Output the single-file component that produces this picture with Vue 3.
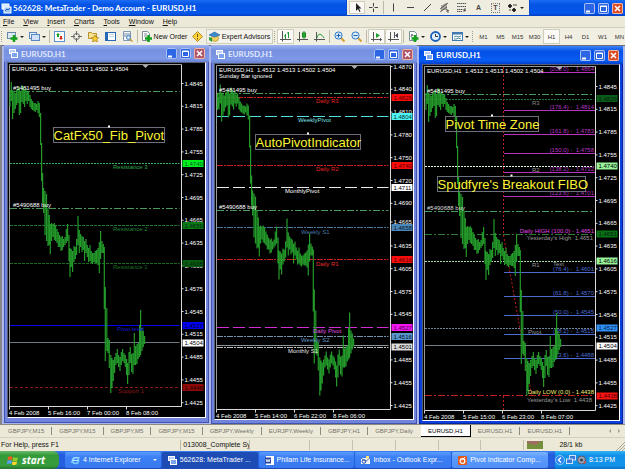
<script setup>
const menus = ['File', 'View', 'Insert', 'Charts', 'Tools', 'Window', 'Help']
const frames = ['M1', 'M5', 'M15', 'M30', 'H1', 'H4', 'D1', 'W1', 'MN']
const tabs = [
  'GBPJPY,M15', 'GBPJPY,M15', 'GBPJPY,M5', 'GBPJPY,M15', 'GBPJPY,Weekly', 'EURJPY,Weekly',
  'GBPJPY,H1', 'GBPJPY,Daily', 'EURUSD,H1', 'EURUSD,H1', 'EURUSD,H1',
]
const activeTab = 8
const quote = 'EURUSD,H1\u00a0 1.4512 1.4513 1.4502 1.4504'

/* x, high, low of every bar */
const bars = [
  [2, 27, 44], [3.3, 19, 38], [4.6, 27, 56], [6, 28, 50], [7.3, 30, 46], [8.6, 27, 42], [10, 25, 40], [11.3, 24, 52],
  [12.6, 28, 50], [14, 22, 39], [15.3, 24, 41], [16.6, 27, 44], [18, 25, 38], [19.3, 29, 41], [20.6, 28, 38], [22, 32, 44],
  [23.3, 36, 46], [24.6, 38, 47], [26, 40, 48], [27.3, 40, 49], [28.6, 41, 47], [30, 38, 50], [31.3, 40, 54], [32.6, 50, 82],
  [33.6, 80, 118], [34.6, 110, 140], [35.6, 125, 150], [37, 128, 172], [38.5, 131, 178], [40, 145, 183], [41.3, 152, 182],
  [42.3, 161, 191], [43.6, 160, 178], [45, 161, 174], [46.3, 160, 177], [47.6, 162, 178], [49, 166, 180], [50.3, 169, 184],
  [51.6, 172, 184], [53, 174, 188], [54.3, 173, 187], [55.6, 176, 184], [57, 174, 182], [58.3, 166, 180], [59.6, 161, 178],
  [61, 172, 198], [62, 185, 214], [63.3, 186, 204], [64.6, 188, 209], [66, 183, 199], [67.3, 184, 196], [68.6, 176, 192],
  [70, 153, 182], [71.3, 167, 190], [72.6, 171, 184], [74, 173, 189], [75.3, 174, 187], [76.6, 178, 198], [78, 176, 190],
  [79.3, 182, 194], [80.6, 185, 199], [82, 182, 198], [83.3, 188, 200], [84.6, 190, 201], [86, 190, 199], [87.3, 188, 200],
  [88.6, 187, 200], [90, 185, 202], [91.3, 179, 210], [92.6, 168, 196], [94, 178, 190], [95.3, 181, 190], [96.3, 184, 246],
  [97.3, 224, 298], [98.8, 245, 288], [100, 275, 290], [101.3, 277, 305], [102.8, 292, 330], [104, 295, 325], [105.3, 297, 318],
  [106.6, 294, 310], [108, 290, 302], [109.3, 286, 300], [110.6, 292, 304], [112, 294, 308], [113.3, 289, 302], [114.6, 286, 298],
  [116, 290, 300], [117.3, 292, 304], [118.6, 296, 312], [119.6, 300, 321], [121, 289, 312], [122.3, 284, 300], [123.6, 291, 309],
  [125, 290, 311], [126.3, 270, 302], [127.6, 283, 302], [129, 281, 301], [130.3, 280, 296], [131.6, 262, 294], [132.6, 247, 292],
  [134, 265, 288], [135.3, 268, 284], [136.6, 273, 281],
]
const barPath = bars.map(([x, h, l]) => `M${x} ${h}V${l}`).join('')

function scale(first, count, y) {
  return Array.from({ length: count }, (_, i) => ({ v: (first - i * 0.003).toFixed(4), y: y + i * 22.8 }))
}
const DD = '7 2 2 2'
const charts = [
  {
    id: 'a', w: 197, h: 354, axis: 173.5, base: 343.5, dx: 0, dy: 0, head: 8, sub: '',
    scale: scale(1.4845, 15, 20.5),
    times: ['4 Feb 2008', '5 Feb 16:00', '7 Feb 00:00', '8 Feb 08:00'],
    lines: [
      { y: 28.5, c: '#4a9a5c', d: DD }, { y: 100.5, c: '#3cb062', d: '2 1' }, { y: 145.5, c: '#4a9a5c', d: DD },
      { y: 162.5, c: '#1f7a30', d: '3 1' }, { y: 200.5, c: '#196a22', d: '3 1' }, { y: 262.5, c: '#0404f0' },
      { y: 279.5, c: '#6c7884' }, { y: 324.5, c: '#8c1818', d: '3 2' },
    ],
    texts: [
      { x: 5, y: 27, t: '#5481495 buy', c: '#fff' }, { x: 5, y: 144, t: '#5490688 buy', c: '#fff' },
      { x: 105, y: 106, t: 'Resistance 3', c: '#30a850' }, { x: 105, y: 168, t: 'Resistance 2', c: '#208034' },
      { x: 105, y: 206, t: 'Resistance 1', c: '#1a6c22' }, { x: 109, y: 268, t: 'Pivot level', c: '#1818d8' },
      { x: 110, y: 330, t: 'Support 1', c: '#901818' },
    ],
    tags: [
      { y: 100, v: '1.4740', b: '#00f01c', c: '#053' }, { y: 162, v: '1.4659', b: '#0c7a14', c: '#021' },
      { y: 200, v: '1.4608', b: '#0a5c10', c: '#021' }, { y: 262, v: '1.4527', b: '#0000f0', c: '#003' },
      { y: 279.5, v: '1.4504', b: '#fff', c: '#000' }, { y: 324, v: '1.4446', b: '#8e0a0a', c: '#200' },
    ],
    notes: [{ x: 45.5, y: 64.5, w: 111, h: 15, t: 'CatFx50_Fib_Pivot' }],
    fibs: [],
  },
  {
    id: 'b', w: 198, h: 355, axis: 175.5, base: 345.5, dx: 2, dy: 1.5, head: 8, sub: 'Sunday Bar ignored',
    scale: scale(1.487, 16, 3.5).filter((s) => s.v !== '1.4510' && s.v !== '1.4660')
      .map((s) => (Number(s.v) < 1.466 ? { v: (Number(s.v) + 0.0005).toFixed(4), y: s.y - 4 } : { ...s, y: s.y - 1 }))
      .concat([{ v: '1.4665', y: 158 }]),
    times: ['4 Feb 2008', '5 Feb 14:00', '6 Feb 22:00', '8 Feb 06:00'],
    lines: [
      { y: 29.5, c: '#4a9a5c', d: DD }, { y: 33.5, c: '#c82020', d: '6 1 2 1' }, { y: 52.5, c: '#4fe0e0', d: '12 4' },
      { y: 101.5, c: '#c82020', d: '6 1 2 1' }, { y: 123.5, c: '#e8e8e8', d: '12 4' }, { y: 146.5, c: '#4a9a5c', d: DD },
      { y: 163.5, c: '#4a7698', d: '6 1 2 1' }, { y: 195.5, c: '#c82020', d: '6 1 2 1' }, { y: 263.5, c: '#d42cd4', d: '12 4' },
      { y: 272.5, c: '#7593ac', d: '6 1 2 1' }, { y: 281.5, c: '#8d959c' }, { y: 283.5, c: '#b8b8b8', d: '6 1 2 1' },
    ],
    texts: [
      { x: 4, y: 28, t: '#5481495 buy', c: '#fff' }, { x: 4, y: 145, t: '#5490688 buy', c: '#fff' },
      { x: 101, y: 39, t: 'Daily R3', c: '#e42424' }, { x: 83, y: 58, t: 'WeeklyPivot', c: '#7fe4e4' },
      { x: 101, y: 107, t: 'Daily R2', c: '#e42424' }, { x: 70, y: 129, t: 'MonthlyPivot', c: '#fff' },
      { x: 86, y: 170, t: 'Weekly S1', c: '#4c78a8' }, { x: 101, y: 202, t: 'Daily R1', c: '#e83030' },
      { x: 98, y: 269, t: 'Daily Pivot', c: '#e050e0' }, { x: 86, y: 278, t: 'Weekly S2', c: '#6694c4' },
      { x: 73, y: 289, t: 'Monthly S1', c: '#e8e8e8' },
    ],
    tags: [
      { y: 33, v: '1.4829', b: '#f80c0c', c: '#500' }, { y: 52, v: '1.4804', b: '#4ff4f4', c: '#033' },
      { y: 101, v: '1.4740', b: '#f80c0c', c: '#500' }, { y: 123, v: '1.4711', b: '#fff', c: '#000' },
      { y: 163, v: '1.4658', b: '#4a86b8', c: '#012' }, { y: 195, v: '1.4616', b: '#f80c0c', c: '#500' },
      { y: 263, v: '1.4527', b: '#f414f4', c: '#404' }, { y: 272, v: '1.4516', b: '#5a96cc', c: '#012' },
      { y: 282.5, v: '1.4501', b: '#dcdcdc', c: '#000' },
    ],
    notes: [{ x: 40.5, y: 70.5, w: 105, h: 15, t: 'AutoPivotIndicator' }],
    fibs: [],
  },
  {
    id: 'c', w: 196, h: 355, axis: 172.5, base: 345.5, dx: 1, dy: 1, head: 8, sub: '', active: true,
    scale: scale(1.4845, 15, 21.5),
    times: ['4 Feb 2008', '5 Feb 15:00', '6 Feb 23:00', '8 Feb 07:00'],
    lines: [
      { y: 29.5, c: '#4a9a5c', d: DD }, { y: 34.5, c: '#1f7a3c', d: '2 1' }, { y: 101.5, c: '#d8f0d8', d: '2 1' },
      { y: 146.5, c: '#4a9a5c', d: DD }, { y: 169.5, c: '#2c7a34', d: DD }, { y: 196.5, c: '#a8d8a8', d: '2 1' },
      { y: 263.5, c: '#6f8494', d: '2 1' }, { y: 280.5, c: '#747c84' }, { y: 330.5, c: '#c42020', d: DD },
    ],
    texts: [
      { x: 4, y: 28, t: '#5481495 buy', c: '#fff' }, { x: 4, y: 145, t: '#5490688 buy', c: '#ddd' },
      { x: 109, y: 40, t: 'R3', c: '#888' }, { x: 109, y: 107, t: 'R2', c: '#999' }, { x: 109, y: 202, t: 'R1', c: '#999' },
      { x: 130, y: 201, t: 'Text', c: '#999' }, { x: 105, y: 269, t: 'Pivot', c: '#999' },
      { x: 171, y: 168, t: 'Daily HIGH (100.0) - 1.4651', c: '#e044e4', e: true },
      { x: 170, y: 175, t: "Yesterday's High\u00a0 1.4651", c: '#999', e: true },
      { x: 171, y: 329, t: 'Daily LOW (0.0) - 1.4438', c: '#f0ec70', e: true },
      { x: 169, y: 337, t: "Yesterday's Low\u00a0 1.4438", c: '#999', e: true },
    ],
    tags: [
      { y: 33, v: '1.4829', b: '#0a5c18', c: '#021' }, { y: 100.5, v: '1.4740', b: '#98f498', c: '#000' },
      { y: 168.5, v: '1.4651', b: '#0a7014', c: '#021' }, { y: 195.5, v: '1.4616', b: '#98f498', c: '#000' },
      { y: 262.5, v: '1.4527', b: '#3090f8', c: '#024' }, { y: 280.5, v: '1.4504', b: '#fff', c: '#000' },
      { y: 330.5, v: '1.4438', b: '#f41414', c: '#500' },
    ],
    notes: [
      { x: 22.5, y: 51.5, w: 93, h: 15, t: 'Pivot Time Zone' },
      { x: 14.5, y: 111.5, w: 148, h: 15, t: "Spudfyre's Breakout FIBO" },
    ],
    fibs: [
      { y: 7.5, t: '(200.0) -\u00a0 1.4864', c: '#b834c0' }, { y: 45.5, t: '(176.4) -\u00a0 1.4814', c: '#b834c0' },
      { y: 69.5, t: '(161.8) -\u00a0 1.4783', c: '#b834c0' }, { y: 88.5, t: '(150.0) -\u00a0 1.4758', c: '#b834c0' },
      { y: 107.5, t: '(138.2) -\u00a0 1.4732', c: '#b834c0' }, { y: 131.5, t: '(123.6) -\u00a0 1.4701', c: '#b834c0' },
      { y: 207.5, t: '(76.4) -\u00a0 1.4601', c: '#4c6cd0' }, { y: 231.5, t: '(61.8) -\u00a0 1.4570', c: '#4c6cd0' },
      { y: 250.5, t: '(50.0) -\u00a0 1.4545', c: '#4c6cd0' }, { y: 269.5, t: '(38.2) -\u00a0 1.4515', c: '#4c6cd0' },
      { y: 293.5, t: '(23.6) -\u00a0 1.4488', c: '#4c6cd0' },
    ],
  },
]
</script>

<template>
  <div class="app">
    <header class="titlebar">
      <svg class="ic" viewBox="0 0 11 11"><rect x="1" y="1" width="7" height="5" fill="#cfe4ff" stroke="#fff" /><rect x="3" y="4" width="7" height="6" fill="#9cc4f4" stroke="#fff" /><path d="M4 8l2-2 1 1 2-2" stroke="#2560c0" fill="none" /></svg>
      <h1>562628: MetaTrader - Demo Account - EURUSD,H1</h1>
      <div class="drawbar">
        <button class="tb on" aria-label="Cursor"><svg class="ic" viewBox="0 0 11 11"><path d="M4 1v8l2-2 1.500 3 1-.5L7 6.500h2.500z" fill="#222" /></svg></button>
        <button class="tb" aria-label="Crosshair"><svg class="ic" viewBox="0 0 11 11"><path d="M5.500 1v3.500M5.500 6.500V10M1 5.500h3.500M6.500 5.500H10" stroke="#444" /></svg></button>
        <i class="sep"></i>
        <button class="tb" aria-label="Vertical line"><svg class="ic" viewBox="0 0 11 11"><path d="M5.500 1.500v8" stroke="#444" /></svg></button>
        <button class="tb" aria-label="Horizontal line"><svg class="ic" viewBox="0 0 11 11"><path d="M2 5.500h7" stroke="#444" /></svg></button>
        <button class="tb" aria-label="Trendline"><svg class="ic" viewBox="0 0 11 11"><path d="M2 9l7-7" stroke="#444" /></svg></button>
        <button class="tb" aria-label="Equidistant channel"><svg class="ic" viewBox="0 0 11 11"><path d="M1 7l8-6M1 10l7-5M3 3v6M5 2v6M7 1v7M8 7v3h2M8 8.500h2" stroke="#444" fill="none" stroke-width=".8" /></svg></button>
        <button class="tb" aria-label="Fibonacci retracement"><svg class="ic" viewBox="0 0 11 11"><path d="M1 1.500h9M1 4.500h9M1 7.500h6M1 9.500h5" stroke="#555" stroke-dasharray="1.500 .5" /><path d="M8 10V7h2M8 8.500h2" stroke="#333" fill="none" stroke-width=".8" /></svg></button>
        <button class="tb letter">A</button>
        <button class="tb letter"><span class="boxed">T</span></button>
        <button class="tb wide" aria-label="Arrows"><svg class="ic" viewBox="0 0 11 11"><path d="M1 4l2-2 2 2-2 2zM5 8l2-2 2 2-2 2zM6 3h4M2 8h2" fill="#222" stroke="#222" stroke-width=".8" /></svg><i class="dd"></i></button>
      </div>
      <div class="ctl">
        <button aria-label="Minimize"><svg viewBox="0 0 11 11"><path d="M2 8.500h4" stroke="#fff" stroke-width="2" /></svg></button>
        <button aria-label="Restore"><svg viewBox="0 0 11 11"><path d="M2.500 3h6v5.500h-6zM2.500 3.500h6" stroke="#fff" fill="none" /></svg></button>
        <button class="x" aria-label="Close"><svg viewBox="0 0 11 11"><path d="M3 3l5 5M8 3L3 8" stroke="#fff" stroke-width="1.500" /></svg></button>
      </div>
    </header>

    <nav class="menu">
      <button v-for="m in menus" :key="m"><u>{{ m[0] }}</u>{{ m.slice(1) }}</button>
    </nav>

    <div class="toolbar">
      <i class="grip"></i>
      <button class="tb wide" aria-label="New chart"><svg class="ic" viewBox="0 0 11 11"><rect x=".5" y="1.500" width="8" height="6" fill="#dcebf8" stroke="#6888a8" /><path d="M7 4v7M3.500 7.500h7" stroke="#14a01c" stroke-width="2.500" /></svg><i class="dd"></i></button>
      <button class="tb wide" aria-label="Profiles"><svg class="ic" viewBox="0 0 11 11"><rect x=".5" y="1.500" width="7" height="6" fill="#e4f0fc" stroke="#5c86bc" /><rect x="2.500" y="3.500" width="8" height="6" fill="#cfe2f8" stroke="#5c86bc" /></svg><i class="dd"></i></button>
      <i class="sep"></i>
      <button class="tb" aria-label="Market Watch"><svg class="ic" viewBox="0 0 11 11"><rect x=".5" y=".5" width="10" height="10" fill="#fff" stroke="#5c90cc" /><path d="M2 4l2-2 2 2H5v2H3V4z" fill="#18a028" /><path d="M5 7h1V5h2v2h1L7 9z" fill="#d83018" /></svg></button>
      <button class="tb" aria-label="Data Window"><svg class="ic" viewBox="0 0 11 11"><circle cx="5.500" cy="5.500" r="3" fill="none" stroke="#666" /><path d="M5.500 0v4M5.500 7v4M0 5.500h4M7 5.500h4" stroke="#666" /></svg></button>
      <button class="tb" aria-label="Navigator"><svg class="ic" viewBox="0 0 11 11"><path d="M.5 1.500h3l1 1h4v5h-8z" fill="#f8e490" stroke="#b89030" /><path d="M7 4l1.200 2.300 2.500.3L9 8.400l.4 2.500L7 9.700l-2.400 1.200L5 8.400 3.300 6.600l2.500-.3z" fill="#fcd030" stroke="#a87818" stroke-width=".7" /></svg></button>
      <button class="tb" aria-label="Terminal"><svg class="ic" viewBox="0 0 11 11"><rect x=".5" y="1.500" width="10" height="8" fill="#fff" stroke="#2868b8" /><path d="M1 2h2v7H1z" fill="#2868b8" /><path d="M4 3.500h5M4 5.500h5" stroke="#c4d8ec" /></svg></button>
      <button class="tb" aria-label="Strategy Tester"><svg class="ic" viewBox="0 0 11 11"><path d="M1.500.5h7v9h-7z" fill="#f4f8fc" stroke="#8098b0" /><path d="M3 2v4M5 2v5M7 2v3" stroke="#7890a8" /><circle cx="6.500" cy="6.500" r="2" fill="#cfe6fa" stroke="#4880c0" /><path d="M8 8l2.500 2.500" stroke="#c89830" stroke-width="1.500" /></svg></button>
      <i class="sep"></i>
      <button class="tb order"><svg class="ic" viewBox="0 0 11 11"><path d="M1.500.5h5l2 2v7h-7z" fill="#fff" stroke="#7c8c98" /><path d="M3 3h3M3 5h3" stroke="#889" /><path d="M7.500 4v7M4 7.500h7" stroke="#14a01c" stroke-width="2.500" /></svg>New Order</button>
      <button class="tb" aria-label="MetaEditor"><svg class="ic" viewBox="0 0 11 11"><path d="M5.500.5l5 5-5 5-5-5z" fill="#fcd440" stroke="#b88818" /><path d="M5.500 3v3M5.500 7v1.500" stroke="#7a5008" /></svg></button>
      <button class="tb ea on"><svg class="ic" viewBox="0 0 11 11"><circle cx="6" cy="7" r="3.500" fill="#f0d060" stroke="#a88420" stroke-width=".6" /><path d="M0 4l5.500-3L11 4 5.500 6z" fill="#3c8cd0" stroke="#205c98" stroke-width=".6" /><path d="M0 6v3l3 2V7z" fill="#28a038" /></svg>Expert Advisors</button>
      <i class="grip"></i>
      <button class="tb on" aria-label="Bar chart"><svg class="ic" viewBox="0 0 11 11"><path d="M2.500 0v10.500M0 8.500h11" stroke="#555" /><path d="M5.500 3v5M8.500 1v6M7 2h1.500M4 5h1.500" stroke="#1c9830" /></svg></button>
      <button class="tb" aria-label="Candlesticks"><svg class="ic" viewBox="0 0 11 11"><path d="M2.500 1v9.500M0 8.500h11" stroke="#555" /><path d="M7 0v8" stroke="#1c9830" /><rect x="5.500" y="2" width="3" height="4" fill="#28b03c" stroke="#14801c" /></svg></button>
      <button class="tb" aria-label="Line chart"><svg class="ic" viewBox="0 0 11 11"><path d="M2.500 1v9.500M0 8.500h11" stroke="#555" /><path d="M3 7c1-5 4-5 7 0" stroke="#1c9830" fill="none" /></svg></button>
      <i class="sep"></i>
      <button class="tb" aria-label="Zoom in"><svg class="ic" viewBox="0 0 11 11"><path d="M7 7l3.500 3.500" stroke="#d0a030" stroke-width="2" /><circle cx="4.500" cy="4.500" r="3.600" fill="#d8ecfc" stroke="#2c78c8" /><path d="M2.500 4.500h4M4.500 2.500v4" stroke="#2060b0" /></svg></button>
      <button class="tb" aria-label="Zoom out"><svg class="ic" viewBox="0 0 11 11"><path d="M7 7l3.500 3.500" stroke="#d0a030" stroke-width="2" /><circle cx="4.500" cy="4.500" r="3.600" fill="#d8ecfc" stroke="#2c78c8" /><path d="M2.500 4.500h4" stroke="#2060b0" /></svg></button>
      <i class="sep"></i>
      <button class="tb on" aria-label="Auto scroll"><svg class="ic" viewBox="0 0 11 11"><path d="M2.500 1v9.500M0 8.500h11M9.500 7v3" stroke="#555" /><path d="M5 2l4 2.500L5 7z" fill="#1ca030" /></svg></button>
      <button class="tb on" aria-label="Chart shift"><svg class="ic" viewBox="0 0 11 11"><path d="M2.500 1v9.500M0 8.500h11M6.500 1v6" stroke="#555" /><path d="M10 2L7 4.500 10 7z" fill="#445" /></svg></button>
      <i class="sep"></i>
      <button class="tb wide" aria-label="Indicators"><svg class="ic" viewBox="0 0 11 11"><path d="M1.500.5h5l2 2v7h-7z" fill="#fff" stroke="#7c8c98" /><path d="M3 6l1-3 1 2" stroke="#667" fill="none" /><path d="M7 4v7M3.500 7.500h7" stroke="#14a01c" stroke-width="2.500" /></svg><i class="dd"></i></button>
      <button class="tb wide" aria-label="Periods"><svg class="ic" viewBox="0 0 11 11"><circle cx="5.500" cy="5.500" r="4.500" fill="#e4f2fe" stroke="#1c62b8" stroke-width="1.800" /><path d="M5.500 3v2.500H8" stroke="#333" fill="none" /></svg><i class="dd"></i></button>
      <button class="tb wide" aria-label="Templates"><svg class="ic" viewBox="0 0 11 11"><rect x=".5" y="1.500" width="10" height="8" fill="#fff" stroke="#4078b0" /><path d="M1 2.500h9" stroke="#4078b0" stroke-width="2" /><path d="M2 6l2-1 2 1 3-1M2 8h3l1-1 3 1" stroke="#4a90a0" fill="none" /></svg><i class="dd"></i></button>
      <i class="grip"></i>
      <button v-for="f in frames" :key="f" class="tb tf" :class="{ on: f === 'H1' }">{{ f }}</button>
    </div>

    <main class="desk">
      <section v-for="c in charts" :key="c.id" class="win" :class="[c.id, { active: c.active }]">
        <div class="wt">
          <svg class="wi" viewBox="0 0 9 9"><rect x=".5" y=".5" width="6" height="4" fill="#b8d0f8" stroke="#fff" /><rect x="2.500" y="3.500" width="6" height="5" fill="#7ca4ec" stroke="#fff" /></svg>
          <h2>EURUSD,H1</h2>
          <div class="ctl">
            <button aria-label="Minimize"><svg viewBox="0 0 11 11"><path d="M2 8.500h4" stroke="#fff" stroke-width="2" /></svg></button>
            <button aria-label="Maximize"><svg viewBox="0 0 11 11"><path d="M2.500 3h6v5.500h-6zM2.500 3.500h6" stroke="#fff" fill="none" /></svg></button>
            <button class="x" aria-label="Close"><svg viewBox="0 0 11 11"><path d="M3 3l5 5M8 3L3 8" stroke="#fff" stroke-width="1.500" /></svg></button>
          </div>
        </div>
        <svg class="chart" :viewBox="`0 0 ${c.w} ${c.h}`">
          <rect :width="c.w" :height="c.h" fill="#000" />
          <path :d="`M1.500 ${c.base}V1.500H${c.axis}`" fill="none" stroke="#9a9a9a" />
          <path :d="`M1.500 ${c.base}H${c.axis}V1.500`" fill="none" stroke="#d8d8d8" />
          <line v-for="(l, i) in c.lines" :key="'l' + i" x1="2" :x2="c.axis - 2" :y1="l.y" :y2="l.y" :stroke="l.c" :stroke-dasharray="l.d" />
          <g v-if="c.fibs.length" stroke="#c01c1c" stroke-dasharray="2 2" fill="none">
            <path d="M80.500 2V168M80.500 331v14M80.500 170l28 160" />
          </g>
          <g v-for="(f, i) in c.fibs" :key="'f' + i">
            <line :x1="i ? 81 : 115" x2="172" :y1="f.y" :y2="f.y" :stroke="f.c" />
            <text x="171" :y="f.y - 1.500" :fill="f.c" text-anchor="end">{{ f.t }}</text>
          </g>
          <path :d="barPath" :transform="`translate(${c.dx} ${c.dy})`" class="bars" />
          <path v-if="c.id === 'b'" d="M2.500 30v16M3.500 33v11" class="bars" />
          <path :d="`M${c.axis - 39} 2h6l-3 3z`" fill="#b0b0b0" />
          <text x="4" :y="c.head" fill="#fff">{{ quote }}</text>
          <text v-if="c.sub" x="4" y="14" fill="#fff">{{ c.sub }}</text>
          <text v-for="(t, i) in c.texts" :key="'t' + i" :x="t.x" :y="t.y" :fill="t.c" :text-anchor="t.e ? 'end' : 'start'">{{ t.t }}</text>
          <g v-for="s in c.scale" :key="s.v">
            <path :d="`M${c.axis} ${s.y}h2`" stroke="#ddd" />
            <text :x="c.axis + 3" :y="s.y + 2" fill="#fff">{{ s.v }}</text>
          </g>
          <g v-for="g in c.tags" :key="g.v">
            <rect :x="c.axis + 1" :y="g.y - 3" width="21" height="7" :fill="g.b" />
            <text :x="c.axis + 3" :y="g.y + 2.500" :fill="g.c">{{ g.v }}</text>
          </g>
          <g v-for="(t, i) in c.times" :key="t">
            <path :d="`M${1.5 + i * 39} ${c.base}v3`" stroke="#ddd" />
            <text :x="1 + i * 39" :y="c.base + 8" fill="#fff">{{ t }}</text>
          </g>
          <g v-for="n in c.notes" :key="n.t">
            <rect :x="n.x" :y="n.y" :width="n.w" :height="n.h" fill="none" stroke="#6c7078" />
            <rect :x="n.x + n.w / 2 - 1" :y="n.y - 2" width="2" height="2" fill="#fff" />
            <text class="note" :x="n.x" :y="n.y + 12">{{ n.t }}</text>
          </g>
        </svg>
      </section>
    </main>

    <div class="tabs">
      <button v-for="(t, i) in tabs" :key="i" :class="{ cur: i === activeTab, before: i === activeTab - 1 }">{{ t }}</button>
      <span class="arrows"><i></i><i></i></span>
    </div>

    <footer class="status">
      <span class="help">For Help, press F1</span>
      <span class="file">013008_Complete Sy</span>
      <span class="cell first"></span><span class="cell"></span><span class="cell"></span><span class="cell"></span><span class="cell"></span><span class="cell"></span>
      <span class="net">
        <svg viewBox="0 0 16 9"><path d="M1 1v8M3 1v8M5 1v8M7 1v8M9 1v8M11 1v8M13 1v8M15 1v8" stroke="#6c1c10" stroke-width="1.200" /><path d="M1 3v6M3 4v5M5 4v5M7 5v4M9 5v4M11 3v6M13 2v7M15 1v8" stroke="#58a824" stroke-width="1.200" /></svg>
        28/1 kb
      </span>
      <svg class="size" viewBox="0 0 10 10"><path d="M10 1L1 10M10 4l-6 6M10 7l-3 3" stroke="#aaa794" /></svg>
    </footer>

    <div class="taskbar">
      <button class="start"><svg viewBox="0 0 12 11"><path d="M1 2c2-1 3-1 4.500 0L5 5.200C3.500 4.300 2 4.300.500 5z" fill="#f05a20" /><path d="M6.200 2.200C8 3 9 3 11 2.200L10.300 5.500C8.500 6.200 7.500 6.200 5.700 5.400z" fill="#8cd030" /><path d="M.4 5.800c1.500-.8 3-.7 4.500.1L4.300 9C3 8.200 1.500 8.200 0 9z" fill="#5c9cf8" /><path d="M5.500 6.200c1.800.8 3 .8 4.600.1L9.500 9.600C8 10.300 6.500 10.200 5 9.400z" fill="#fcd428" /></svg>start</button>
      <div class="tasks">
        <button><svg class="ti" viewBox="0 0 9 9"><circle cx="4.500" cy="4.500" r="3" fill="none" stroke="#7cd0ff" stroke-width="1.600" /><path d="M2 4.500h5" stroke="#b8e8ff" /><path d="M0 7C2 3 6 0 9 2" stroke="#c8e8ff" stroke-width=".7" fill="none" /></svg><span>4 Internet Explorer</span><i class="dd light"></i></button>
        <button class="cur"><svg class="ti" viewBox="0 0 9 9"><rect x=".5" y=".5" width="6" height="4" fill="#b8d0f8" stroke="#fff" /><rect x="2.500" y="3.500" width="6" height="5" fill="#7ca4ec" stroke="#fff" /></svg><span>562628: MetaTrader ...</span></button>
        <button><svg class="ti" viewBox="0 0 9 9"><rect x="1" width="8" height="9" fill="#fff" /><rect y="1.500" width="6" height="6" fill="#2848a0" /><path d="M1 3l1 3 1-2.500L4 6l1-3" stroke="#fff" stroke-width=".8" fill="none" /></svg><span>Philam Life Insurance...</span></button>
        <button><svg class="ti" viewBox="0 0 9 9"><rect y="2" width="9" height="6" fill="#f4f4fc" /><path d="M0 2l4.500 3.500L9 2" stroke="#5878b0" fill="none" /><circle cx="3" cy="5.500" r="1.800" fill="none" stroke="#1848a8" /><rect x="5" width="3" height="2.500" fill="#fce078" /></svg><span>Inbox - Outlook Expr...</span></button>
        <button class="flash"><svg class="ti" viewBox="0 0 9 9"><rect width="9" height="9" rx="1" fill="#e45818" /><circle cx="4.500" cy="5" r="2.400" fill="none" stroke="#fff" stroke-width="1.200" /><path d="M4 4.500L7 1" stroke="#fff" /></svg><span>Pivot Indicator Comp...</span></button>
      </div>
      <div class="tray">
        <svg class="tr" viewBox="0 0 10 10"><circle cx="5" cy="5" r="4.500" fill="#2c84ec" stroke="#8cc8fc" /><path d="M6 2.500L3.500 5 6 7.500" stroke="#fff" stroke-width="1.400" fill="none" /></svg>
        <svg class="tr" viewBox="0 0 10 10"><rect x="3.500" y=".5" width="6" height="4.500" fill="#3c78d8" stroke="#d0e4f8" /><rect x=".5" y="4" width="6" height="4.500" fill="#3c78d8" stroke="#d0e4f8" /></svg>
        <svg class="tr" viewBox="0 0 10 10"><circle cx="4.500" cy="5" r="4" fill="#9aa4b4" stroke="#4c5870" /><circle cx="4.500" cy="5" r="1.600" fill="#3c4454" /><path d="M7 8.500l2-2" stroke="#e04020" stroke-width="1.500" /></svg>
        <time>8:13 PM</time>
      </div>
    </div>
  </div>
</template>

<style>
body { margin: 0; background: #ece9d8; }
</style>

<style scoped>
.app { font: 7px/10px "Liberation Sans", Arial, sans-serif; color: #111; background: #ece9d8; overflow: hidden; }
button { font: inherit; color: inherit; background: none; border: 0; padding: 0; margin: 0; white-space: nowrap; }
svg { display: block; }
.ic { width: 11px; height: 11px; flex: none; }
h1, h2 { margin: 0; color: #fff; font-family: Lato, "Liberation Sans", sans-serif; font-weight: bold; white-space: nowrap; }

.titlebar { display: flex; align-items: center; height: 16px; padding: 0 2px 0 1px; background: linear-gradient(#1c6cf4, #0453e4 30%, #0458ec 80%, #0440c4); }
h1 { font-size: 8px; line-height: 16px; margin-left: 1px; }
.drawbar { display: flex; align-items: center; box-sizing: border-box; height: 16px; width: 184px; margin-left: auto; padding-left: 2px; background: #efece0; border: 1px solid #0a48cc; border-top: 0; }
.titlebar .ctl { margin-left: 54px; }
.ctl { display: flex; gap: 3px; }
.ctl button { width: 11px; height: 11px; background: #2c66e4; border-radius: 2px; box-shadow: inset 0 0 0 1px #a8c0f4; }
.ctl button.x { background: #dc4c24; box-shadow: inset 0 0 0 1px #f0b8a4; }
.wt .ctl button.x { background: #b0566c; }
.active .wt .ctl button.x { background: #dc4c24; }

.menu { display: flex; height: 12px; padding-left: 3px; gap: 9px; border-bottom: 1px solid #cfccba; box-sizing: border-box; }
.menu button { line-height: 12px; }

.toolbar { display: flex; align-items: center; height: 17px; background: #f1eee2; overflow: hidden; }
.tb { flex: none; display: flex; align-items: center; justify-content: center; box-sizing: border-box; width: 17px; height: 15px; }
.tb.on { background: #fbfaf6; border: 1px solid #d0cdbd; }
.drawbar .tb.on { width: 16px; height: 13px; }
.tb.wide { width: 22px; gap: 2px; }
.tb.order { width: 50px; gap: 2px; }
.tb.ea { width: 67px; gap: 2px; background: #f4f2ea; }
.tf { font-size: 6px; color: #333; }
.letter { font-weight: bold; color: #444; }
.boxed { width: 7px; line-height: 8px; border: 1px dotted #777; }
.dd { width: 0; height: 0; border: 2px solid transparent; border-top-color: #222; border-bottom: 0; }
.dd.light { border-top-color: #fff; margin-left: auto; }
.sep { flex: none; width: 1px; height: 13px; margin: 0 1px; background: #bdb9a6; }
.grip { flex: none; width: 2px; height: 11px; margin: 0 1px; border-left: 1px dotted #a29f8e; box-sizing: border-box; }

.desk { display: grid; grid-template-columns: 205fr 206fr 204fr; column-gap: 2px; align-items: start; padding: 0 2px 0 2px; border-left: 2px solid #85858a; background: #aab6ec; box-shadow: inset 0 1px 0 #6a6c78; }
.win { padding: 0 3px 5px; background: #7084dc; box-shadow: inset 1px 0 0 #4254b0, inset -1px -1px 0 #4254b0; }
.win.b { padding-bottom: 4px; }
.win.active { margin-top: 1px; padding-bottom: 3px; background: #0c40dc; box-shadow: inset 1px 0 0 #0424a0, inset -1px -1px 0 #0424a0; }
.wt { display: flex; align-items: center; height: 17px; margin: 0 -3px; padding: 0 4px 0 5px; background: linear-gradient(#9cb4f0, #7690e0 30%, #7c98e6 80%, #6c84d4); }
.b .wt, .active .wt { height: 18px; }
.active .wt { background: linear-gradient(#3c84fc, #0450e4 30%, #085cf4 80%, #0440c8); }
.wi { width: 9px; height: 9px; }
h2 { font-size: 8px; line-height: 12px; margin-left: 3px; color: #e0e8fc; }
.active h2 { color: #fff; }
.wt .ctl { margin-left: auto; }
.chart { width: 100%; height: auto; box-sizing: border-box; border: 1px solid #fff; border-top-color: #555c78; border-left-color: #555c78; font: 6px "Liberation Sans", Arial, sans-serif; }
.bars { fill: none; stroke: #239a2a; stroke-width: 1.2; }
.note { font-size: 13px; fill: #fcf434; }

.tabs { display: flex; align-items: center; height: 13px; border-top: 1px solid #8d8b80; box-sizing: border-box; padding-left: 1px; color: #74726a; font-size: 6px; }
.tabs button { padding: 0 7px; border-right: 1px solid #8d8b80; line-height: 8px; }
.tabs button.before { border-right-color: transparent; }
.tabs .cur { background: #fff; color: #000; align-self: stretch; border-right: 1px solid #000; border-bottom: 1px solid #000; }
.arrows { display: flex; gap: 7px; margin-left: auto; padding-right: 5px; }
.arrows i { border: 2px solid transparent; border-right-color: #9c9a8c; border-left: 0; }
.arrows i + i { border: 2px solid transparent; border-left-color: #9c9a8c; border-right: 0; }

.status { display: flex; align-items: center; height: 14px; border-top: 1px solid #d4d1c0; box-sizing: border-box; }
.help { flex: 184; padding-left: 1px; box-sizing: border-box; }
.file { flex: 67; box-sizing: border-box; padding-left: 2px; border: solid #bdb9a6; border-width: 0 1px; overflow: hidden; white-space: nowrap; }
.cell { flex: 43; height: 10px; box-sizing: border-box; border-right: 1px solid #c4c1b0; }
.cell.first { flex: 61; }
.net { flex: 90; display: flex; align-items: center; gap: 16px; padding-left: 3px; white-space: nowrap; }
.net svg { width: 16px; height: 9px; }
.size { width: 10px; height: 10px; align-self: flex-end; }

.taskbar { display: flex; height: 18px; background: linear-gradient(#3c80f0, #245cdc 20%, #2460e0 85%, #1c48b0); color: #fff; }
.start { display: flex; align-items: center; gap: 3px; width: 59px; padding-left: 7px; box-sizing: border-box; background: linear-gradient(#68b868, #349a38 25%, #389c3c 80%, #24742c); border-radius: 0 6px 6px 0; font: italic bold 10px/16px "Open Sans", "Liberation Sans", sans-serif; }
.start svg { width: 12px; height: 11px; }
.tasks { flex: 1; display: grid; grid-template-columns: repeat(5, 1fr); gap: 1px; padding: 1px 7px 1px 6px; min-width: 0; }
.tasks button { display: flex; align-items: center; gap: 3px; padding: 0 4px 0 6px; min-width: 0; background: linear-gradient(#5c9cfc, #3c80f4 30%, #3878f0); border-radius: 2px; }
.tasks span { overflow: hidden; }
.tasks .cur { background: #1c4cb4; }
.tasks .flash { background: linear-gradient(#7cb4fc, #5c9cfc 30%, #5090f8); }
.ti { width: 9px; height: 9px; flex: none; }
.tray { display: flex; align-items: center; gap: 1px; width: 70px; box-sizing: border-box; padding-right: 10px; background: linear-gradient(#30b4f8, #1290e8 25%, #1494ec 80%, #0c70c4); }
.tr { width: 10px; height: 10px; }
.tray time { margin-left: auto; white-space: nowrap; }
</style>
